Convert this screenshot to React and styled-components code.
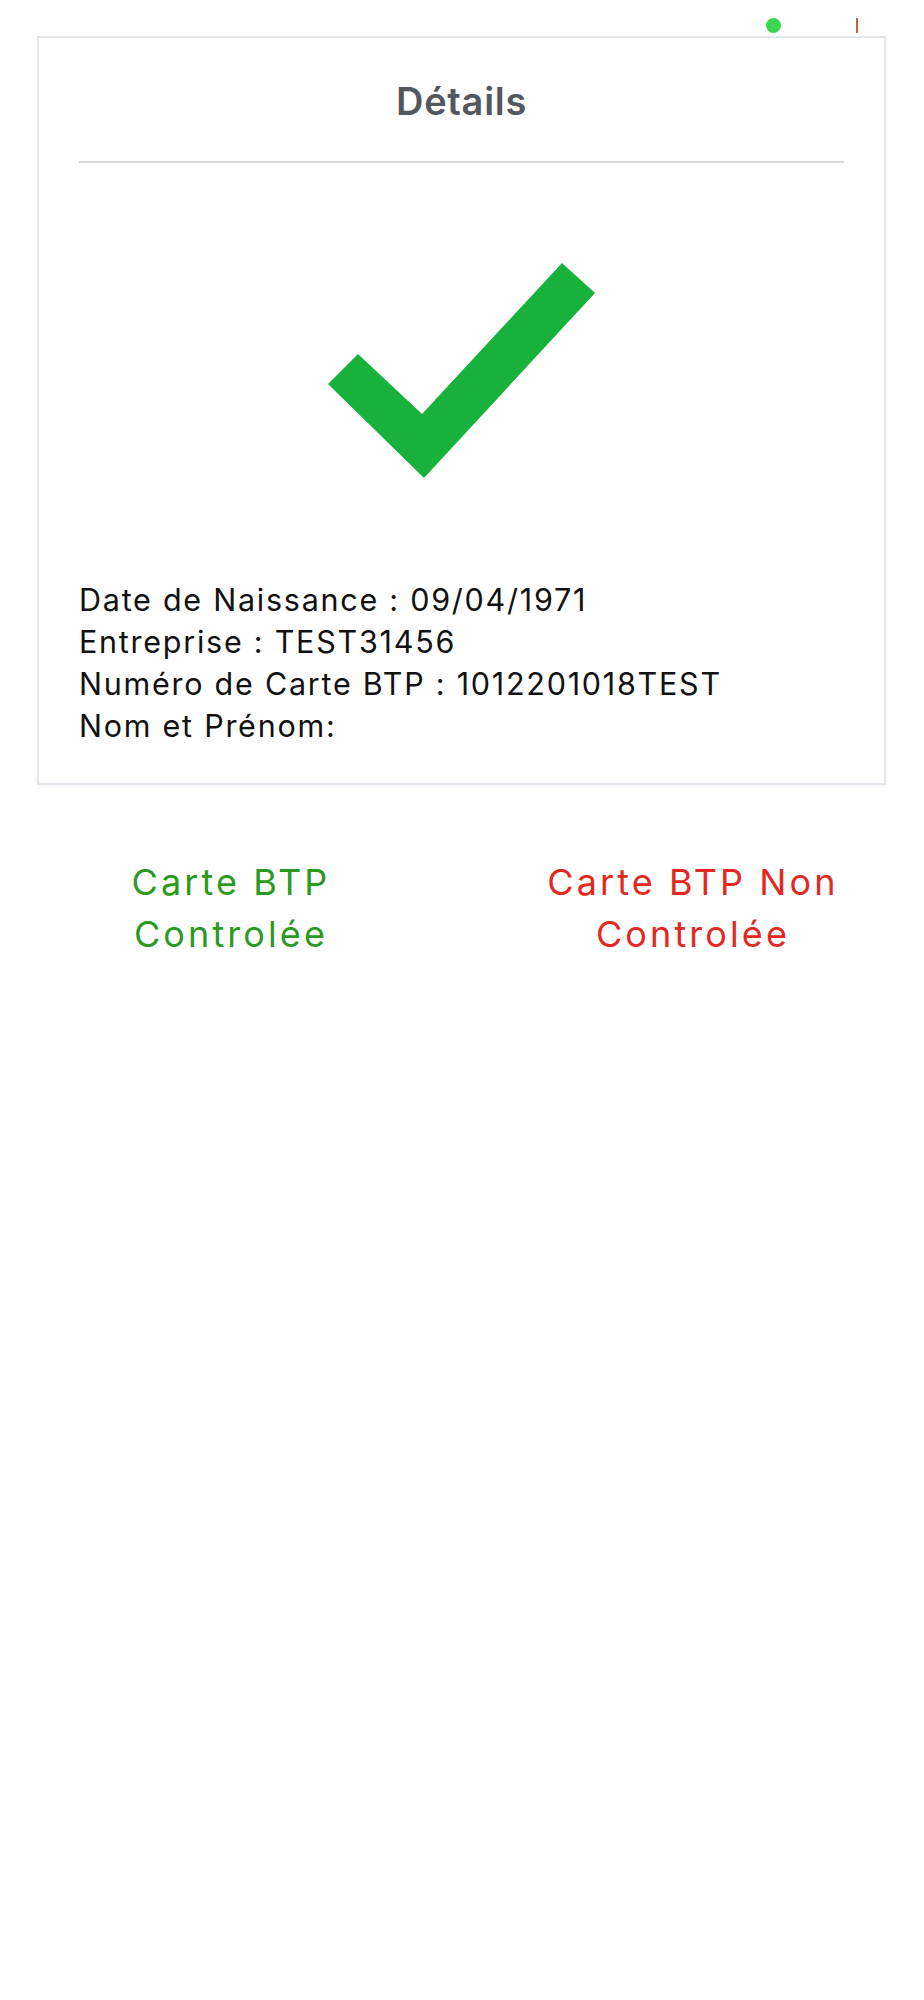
import React from "react";
import styled, { createGlobalStyle } from "styled-components";

const GlobalStyle = createGlobalStyle`
  html, body {
    margin: 0;
    padding: 0;
    background: #ffffff;
  }
  body {
    font-family: Inter, "Noto Sans", "Liberation Sans", sans-serif;
    -webkit-font-smoothing: antialiased;
  }
`;

const Page = styled.div`
  width: 924px;
  min-height: 2000px;
  background: #ffffff;
  display: flex;
  flex-direction: column;
`;

const StatusBar = styled.div`
  height: 36px;
  display: flex;
  align-items: center;
  justify-content: flex-end;
  gap: 75px;
  padding-right: 66px;
  box-sizing: border-box;
`;

const Dot = styled.span`
  width: 15px;
  height: 15px;
  border-radius: 50%;
  background: #3bd650;
  margin-top: 14px;
`;

const Tick = styled.span`
  width: 2px;
  height: 15px;
  background: #c2604c;
  margin-top: 14px;
`;

const Content = styled.main`
  padding: 0 38px 0 37px;
  display: flex;
  flex-direction: column;
`;

const Card = styled.section`
  border: 2px solid #e4e5ed;
  box-shadow: 0 2px 4px rgba(0, 0, 0, 0.05);
  background: #ffffff;
  display: flex;
  flex-direction: column;
  padding: 40px 40px 36px;
`;

const Title = styled.h1`
  margin: 0;
  text-align: center;
  font-family: Inter, "Liberation Sans", sans-serif;
  font-weight: 600;
  font-size: 38px;
  line-height: 46px;
  letter-spacing: 0.7px;
  color: #55575e;
`;

const Divider = styled.hr`
  margin: 37px 0 0;
  border: none;
  height: 2px;
  background: #d9d9dd;
`;

const CheckWrap = styled.div`
  display: flex;
  justify-content: center;
  padding: 100px 0 100px;
`;

const InfoList = styled.div`
  display: flex;
  flex-direction: column;
`;

const InfoLine = styled.div`
  font-family: Inter, "Liberation Sans", sans-serif;
  font-size: 30.5px;
  line-height: 42px;
  letter-spacing: 1.75px;
  color: #111111;
  white-space: nowrap;
`;

const Actions = styled.div`
  display: grid;
  grid-template-columns: 1fr 1fr;
  margin: 71px -38px 0 -37px;
`;

const ActionButton = styled.button`
  background: none;
  border: none;
  padding: 0;
  cursor: pointer;
  font-family: Inter, "Liberation Sans", sans-serif;
  font-size: 36px;
  line-height: 52px;
  letter-spacing: 3.1px;
  text-align: center;
  color: ${(p) => (p.$tone === "ok" ? "#2a9a1f" : "#e2281f")};
`;

function CheckMark() {
  return (
    <svg width="268" height="216" viewBox="0 0 268 216" aria-hidden="true">
      <polygon
        points="0,121 30,91 94,151 234,0 267,30 96,215"
        fill="#18b13b"
      />
    </svg>
  );
}

export default function App() {
  const infos = [
    "Date de Naissance : 09/04/1971",
    "Entreprise : TEST31456",
    "Numéro de Carte BTP : 1012201018TEST",
    "Nom et Prénom:",
  ];
  return (
    <>
      <GlobalStyle />
      <Page>
        <StatusBar>
          <Dot />
          <Tick />
        </StatusBar>
        <Content>
          <Card>
            <Title>Détails</Title>
            <Divider />
            <CheckWrap>
              <CheckMark />
            </CheckWrap>
            <InfoList>
              {infos.map((t) => (
                <InfoLine key={t}>{t}</InfoLine>
              ))}
            </InfoList>
          </Card>
          <Actions>
            <ActionButton $tone="ok">
              Carte BTP
              <br />
              Controlée
            </ActionButton>
            <ActionButton $tone="ko">
              Carte BTP Non
              <br />
              Controlée
            </ActionButton>
          </Actions>
        </Content>
      </Page>
    </>
  );
}
